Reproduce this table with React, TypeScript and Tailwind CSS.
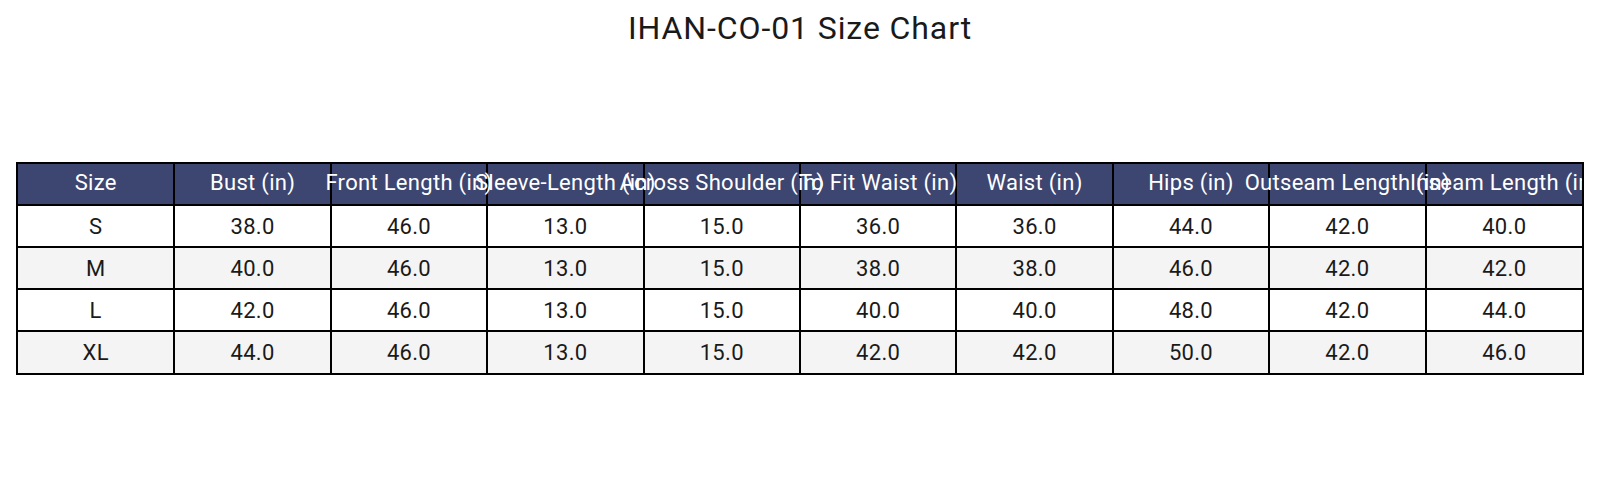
const headers = [
  "Size",
  "Bust (in)",
  "Front Length (in)",
  "Sleeve-Length (in)",
  "Across Shoulder (in)",
  "To Fit Waist (in)",
  "Waist (in)",
  "Hips (in)",
  "Outseam Length (in)",
  "Inseam Length (in)",
];

const rows = [
  ["S", "38.0", "46.0", "13.0", "15.0", "36.0", "36.0", "44.0", "42.0", "40.0"],
  ["M", "40.0", "46.0", "13.0", "15.0", "38.0", "38.0", "46.0", "42.0", "42.0"],
  ["L", "42.0", "46.0", "13.0", "15.0", "40.0", "40.0", "48.0", "42.0", "44.0"],
  ["XL", "44.0", "46.0", "13.0", "15.0", "42.0", "42.0", "50.0", "42.0", "46.0"],
];

export default function App() {
  return (
    <div
      className="min-h-screen bg-white text-[#1a1a1a] px-4 pt-[8px]"
      style={{ fontFamily: "Roboto, 'Liberation Sans', sans-serif" }}
    >
      {/* Title */}
      <h1 className="text-center text-[32px] leading-[40px] tracking-[0.9px] font-normal">
        IHAN-CO-01 Size Chart
      </h1>

      {/* Size table */}
      <div className="mt-[114px] overflow-hidden border-2 border-black">
        <table className="w-full table-fixed border-collapse text-[22px] tracking-[0.3px]">
          <thead>
            <tr className="bg-[#3d4571] text-white">
              {headers.map((h, i) => (
                <th
                  key={h}
                  className={`h-[41px] pb-[3px] font-normal whitespace-nowrap text-center ${
                    i > 0 ? "border-l-2 border-black" : ""
                  }`}
                >
                  <span className="block -mx-10">{h}</span>
                </th>
              ))}
            </tr>
          </thead>
          <tbody>
            {rows.map((r, ri) => (
              <tr
                key={r[0]}
                className={`border-t-2 border-black ${
                  ri % 2 === 1 ? "bg-[#f4f4f4]" : "bg-white"
                }`}
              >
                {r.map((c, ci) => (
                  <td
                    key={ci}
                    className={`h-[42px] text-center ${
                      ci > 0 ? "border-l-2 border-black" : ""
                    }`}
                  >
                    {c}
                  </td>
                ))}
              </tr>
            ))}
          </tbody>
        </table>
      </div>
    </div>
  );
}
